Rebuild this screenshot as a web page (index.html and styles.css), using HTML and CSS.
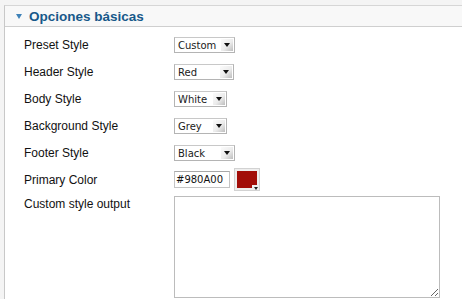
FILE: index.html
```html
<!DOCTYPE html>
<html lang="es">
<head>
  <meta charset="UTF-8">
  <title>Opciones básicas</title>
  <link rel="stylesheet" href="styles.css">
</head>
<body>
  <div class="panel">
    <h3 class="panel-title"><span class="toggle"></span>Opciones básicas</h3>
    <div class="form">
      <label>Preset Style</label>
      <div class="select wide"><span>Custom</span><i class="arrow"></i></div>

      <label>Header Style</label>
      <div class="select wide-less"><span>Red</span><i class="arrow"></i></div>

      <label>Body Style</label>
      <div class="select narrow"><span>White</span><i class="arrow"></i></div>

      <label>Background Style</label>
      <div class="select narrow"><span>Grey</span><i class="arrow"></i></div>

      <label>Footer Style</label>
      <div class="select wide"><span>Black</span><i class="arrow"></i></div>

      <label>Primary Color</label>
      <div class="color-field">
        <input type="text" class="hex" value="#980A00">
        <span class="swatch"><span class="swatch-fill"></span></span>
      </div>

      <label class="top">Custom style output</label>
      <textarea class="output"></textarea>
    </div>
  </div>
</body>
</html>
```

FILE: styles.css
```css
body { margin: 0; background-color: #f4f4f4; font-family: "Liberation Sans", Arial, sans-serif; height: 299px; overflow: hidden; }
.panel {
  margin: 5px 0 0 4px;
  border-left: 1px solid #c8c8c8;
  border-top: 1px solid #d6d6d6;
  background-color: #fff;
  height: 300px;
}
.panel-title {
  margin: 0;
  height: 20px;
  background-color: #f8f8f8;
  border-bottom: 1px solid #cfcfcf;
  color: #17598a;
  font-size: 13.5px;
  font-weight: bold;
  line-height: 21px;
  padding-left: 11px;
  display: flex;
  align-items: center;
}
.toggle {
  width: 0;
  height: 0;
  border-left: 3.5px solid transparent;
  border-right: 3.5px solid transparent;
  border-top: 5px solid #3f82b8;
  margin-right: 7px;
  margin-top: 1px;
}
.form {
  display: grid;
  grid-template-columns: 150px auto;
  grid-auto-rows: 27px;
  padding: 4px 0 0 19px;
  align-items: center;
}
.form label { font-size: 12px; color: #111; }
.form label.top { align-self: start; padding-top: 4px; }

.select {
  display: flex;
  align-items: center;
  justify-content: space-between;
  height: 14px;
  border: 1px solid #b4b4b4;
  border-top-color: #c8c8c8;
  background: #fff;
  font-family: "DejaVu Sans", sans-serif;
  font-size: 10px;
  color: #1a1a1a;
  padding-left: 3px;
  box-sizing: content-box;
  margin-top: 1px;
}
.select.wide { width: 56px; }
.select.wide-less { width: 55px; }
.select.narrow { width: 48px; }
.arrow {
  position: relative;
  width: 12px;
  height: 12px;
  margin-right: 1px;
  background: linear-gradient(135deg, #fbfbfb 0%, #ececec 55%, #bdbdbd 100%);
}
.arrow::after {
  content: "";
  position: absolute;
  left: 3px;
  top: 4px;
  border-left: 3px solid transparent;
  border-right: 3px solid transparent;
  border-top: 4px solid #111;
}

.color-field { display: flex; align-items: center; gap: 4px; }
.hex {
  width: 53px;
  height: 15px;
  margin: 0;
  padding: 0 0 0 1px;
  border: 1px solid #c4c4c4;
  border-top-color: #a8a8a8;
  font-family: "DejaVu Sans", sans-serif;
  font-size: 10px;
  color: #111;
}
.swatch {
  position: relative;
  display: block;
  width: 20px;
  height: 17px;
  padding: 2px;
  border: 1px solid #d2d2d2;
  background: #eee;
}
.swatch-fill { display: block; width: 100%; height: 100%; background: #a20d08; }
.swatch::after {
  content: "";
  position: absolute;
  right: 0;
  bottom: 0;
  width: 7px;
  height: 5px;
  background: #eee;
}
.swatch::before {
  content: "";
  position: absolute;
  right: 1px;
  bottom: 0;
  z-index: 1;
  border-left: 2.5px solid transparent;
  border-right: 2.5px solid transparent;
  border-top: 3px solid #222;
}

.output {
  grid-row: span 4;
  align-self: start;
  width: 264px;
  height: 100px;
  margin: 3px 0 0 0;
  padding: 0;
  border: 1px solid #bcbcbc;
  resize: both;
}
```
